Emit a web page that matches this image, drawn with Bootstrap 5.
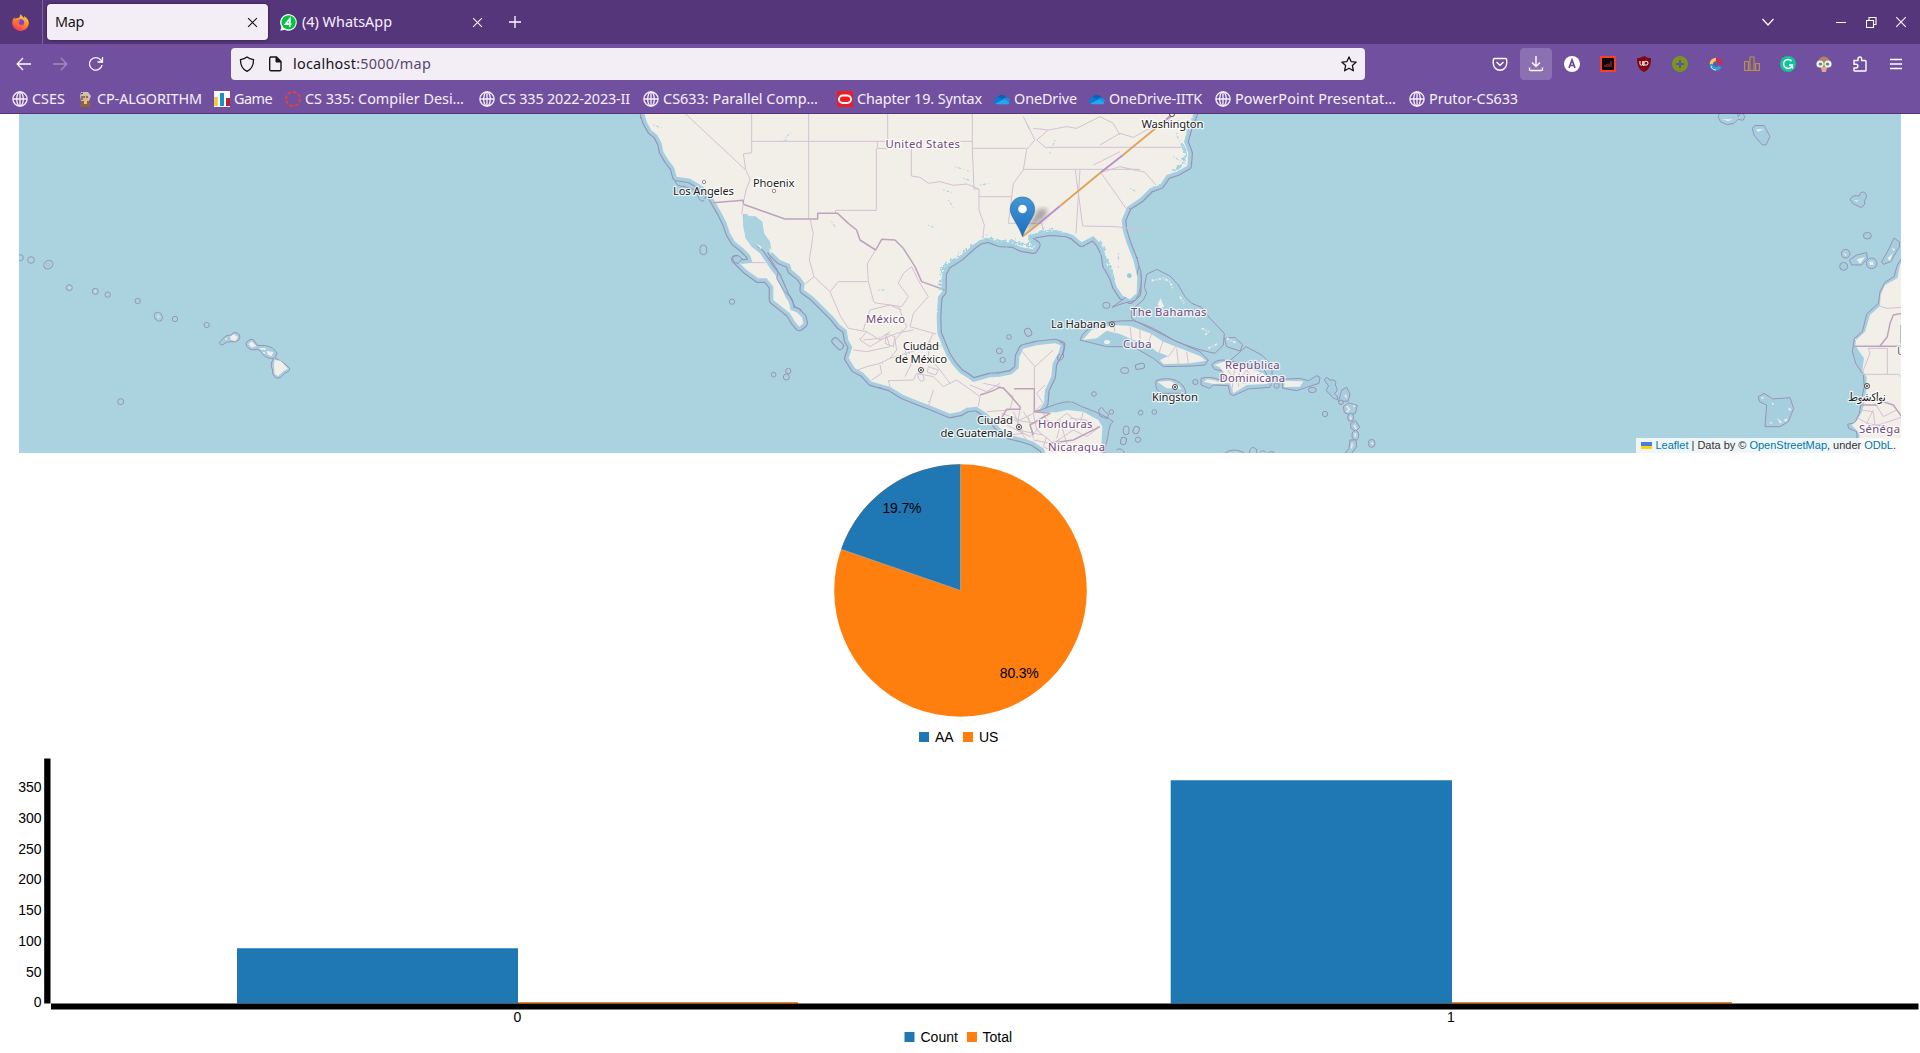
<!DOCTYPE html>
<html lang="en">
<head>
<meta charset="utf-8">
<title>Map</title>
<link href="https://cdn.jsdelivr.net/npm/bootstrap@5.3.0/dist/css/bootstrap.min.css" rel="stylesheet">
<style>
body{background:#fff;font-family:"Noto Sans","Open Sans",sans-serif;font-size:14.4px;width:1920px;height:1053px;overflow:hidden}
svg{display:block;flex:none}
.chrome{color:#f6f0fb}
.tabstrip{height:44px;background:#56367b}
.toolbar{height:40px;background:#7250a0}
.bookmarks{height:30px;background:#7250a0;border-bottom:1px solid #56367b;padding-left:12px}
.ff{width:43px;height:44px;padding-right:2px;border-right:1px solid #7b6198}
.tab{width:221px;height:36px;border-radius:4px;padding:0 10px 0 8px}
.tab.sel{background:#f3eef5;color:#15141a;margin-left:4px;box-shadow:0 0 3px #2c1547}
.urlbar{width:1134px;height:32px;margin-left:117px;border-radius:4px;background:#f3eef5;color:#15141a}
.urlpath{color:#574772}
.navs{padding-left:6px}
.exts{padding-right:6px}
.ico{width:36px;height:32px}
.dl{width:32px;margin:0 2px;background:#8b70b2;border-radius:4px}
.lbl{white-space:nowrap;line-height:18px;margin-left:5px}
.bm{height:24px;margin-top:3px}
.bm .lbl{margin-left:4px}
.bar-end{width:30px}
.mapbox{width:1882px;height:339px;margin-left:19px;background:#aad3df;overflow:hidden}
.attrib{right:0;bottom:0;height:15px;padding:0 5px;background:rgba(255,255,255,.8);font:11px/15px "Liberation Sans",Arial,sans-serif;color:#333}
.attrib a{color:#0078a8;text-decoration:none}
.charts text{font-family:"Liberation Sans",Arial,sans-serif;font-size:14px;fill:#000}
.city,.country{font-family:"Noto Sans",sans-serif;paint-order:stroke;stroke:#fff;stroke-opacity:.75;stroke-width:2.5px;stroke-linejoin:round;font-size:11.3px}
.city{fill:#222}
.country{fill:#734a7c}
.arabic{font-family:"DejaVu Sans",sans-serif}
.edge{fill:#a5cfdf;stroke:#9a92b6;stroke-width:3;stroke-linejoin:round}
.land{fill:#f2efe9}
.state{fill:none;stroke:#d3c1d2;stroke-width:3;stroke-linejoin:round}
.nation{fill:none;stroke:#bda3bd;stroke-width:4.500;stroke-linejoin:round}
.pool{fill:none;stroke:#9ccfe0;stroke-width:3;stroke-dasharray:4 5 9 7 2 12}
.ring{fill:none;stroke:#9a92b6;stroke-width:3}
</style>
<script src="https://cdn.jsdelivr.net/npm/bootstrap@5.3.0/dist/js/bootstrap.bundle.min.js"></script>
</head>
<body>
<svg width="0" height="0" class="position-absolute">
  <defs>
    <symbol id="globe" viewBox="0 0 16 16"><g fill="none" stroke="#f6f0fb" stroke-width="1.300"><circle cx="8" cy="8" r="7.100"/><ellipse cx="8" cy="8" rx="3.300" ry="7.100"/><path d="M8 1v14M1 8h14"/></g></symbol>
    <symbol id="cloud" viewBox="0 0 16 16"><path d="M3 8a5 5 0 0 1 9-2l1.500 2-5 4z" fill="#0364b8"/><path d="M0 10a3.700 3.700 0 0 1 5.500-3.300L10 9l-7 4.200A3.300 3.300 0 0 1 0 10z" fill="#0f78d4"/><path d="M9 7.500a4.500 4.500 0 0 1 4-.4A3.200 3.200 0 0 1 16 10l-3 2z" fill="#1490df"/><path d="M1.500 12.500 10 8.200l5.500 3.500a2.500 2.500 0 0 1-2.200 1.600H3.500a3 3 0 0 1-2-.8z" fill="#28a8ea"/></symbol>
    <symbol id="cross" viewBox="0 0 10 10"><path d="m1 1 8 8M9 1 1 9" fill="none" stroke="currentColor" stroke-width="1"/></symbol>
  </defs>
</svg>

<header class="chrome">
  <div class="tabstrip d-flex align-items-center">
    <div class="ff d-flex align-items-center justify-content-center">
      <svg width="17" height="17" viewBox="0 0 16 16"><defs><linearGradient id="fx" x1=".8" y1="0" x2=".3" y2="1"><stop offset="0" stop-color="#ffe13f"/><stop offset=".5" stop-color="#ff8a24"/><stop offset="1" stop-color="#f0316b"/></linearGradient></defs><path d="M8.500 0c.2 2 2 2.500 3 4 .1-1 0-1.500-.2-2.200C14 3.300 16 6 15.800 8.800 15.500 13 12 16 8 16S.3 12.800.2 8.800C.1 6.300 1 4.500 2.300 3c0 .8.300 1.200.5 1.500C4 3.300 7 4 7.300 2.500 7.400 1.500 8 .5 8.500 0z" fill="url(#fx)"/><circle cx="8.200" cy="8.300" r="3.300" fill="#7542e5"/><path d="M3.500 6.500C5.500 5 7 6 8.300 6.600 7 7 6.500 7.600 6.500 8.500c0 2 3 2.500 4.500.5.3 2-1.500 3.500-3.500 3.300-2.500-.2-4-2.500-4-5.800z" fill="#ff6a2a"/></svg>
    </div>
    <div class="tab sel d-flex align-items-center justify-content-between"><span data-w="29">Map</span><svg width="11" height="11"><use href="#cross"/></svg></div>
    <div class="tab d-flex align-items-center ms-1">
      <svg width="17" height="17" viewBox="0 0 16 16"><path d="M.3 15.700 1.300 12A7.800 7.800 0 1 1 4.300 14.800z" fill="#fff"/><circle cx="8.100" cy="7.900" r="6.700" fill="#08c143"/><path d="M9.200 12V4.500L5.300 9.500h5.400" fill="none" stroke="#fff" stroke-width="1.600"/></svg>
      <span class="lbl me-auto" data-w="90">(4) WhatsApp</span><svg width="11" height="11"><use href="#cross"/></svg>
    </div>
    <svg class="ms-3" width="12" height="12" viewBox="0 0 12 12"><path d="M6 0v12M0 6h12" stroke="#fff" stroke-width="1.300"/></svg>
    <div class="ms-auto d-flex align-items-center pe-1">
      <svg width="12" height="8" viewBox="0 0 12 8" class="me-5"><path d="m.5 1 5.500 6 5.500-6" fill="none" stroke="#fff" stroke-width="1.200"/></svg>
      <div class="bar-end d-flex justify-content-center ms-1"><svg width="10" height="10"><path d="M0 5.500h10" stroke="#fff"/></svg></div>
      <div class="bar-end d-flex justify-content-center"><svg width="11" height="11"><path d="M.5 3.500h7v7h-7zM3 3.500v-3h7v7H7.500" fill="none" stroke="#fff" stroke-width="1.100"/></svg></div>
      <div class="bar-end d-flex justify-content-center"><svg width="12" height="12"><use href="#cross"/></svg></div>
    </div>
  </div>

  <div class="toolbar d-flex align-items-center">
    <div class="navs d-flex">
      <div class="ico d-flex align-items-center justify-content-center"><svg width="16" height="16" viewBox="0 0 16 16"><path d="M15 8H1.500M7 2 1.200 8 7 14" fill="none" stroke="#fff" stroke-width="1.300"/></svg></div>
      <div class="ico d-flex align-items-center justify-content-center"><svg width="16" height="16" viewBox="0 0 16 16"><path d="M1 8h13.500M9 2l5.800 6L9 14" fill="none" stroke="#a28abf" stroke-width="1.300"/></svg></div>
      <div class="ico d-flex align-items-center justify-content-center"><svg width="16" height="16" viewBox="0 0 16 16"><path d="M14 9A6.300 6.300 0 1 1 12.800 4L14.500 6M14.500 1v5H9.500" fill="none" stroke="#fff" stroke-width="1.300"/></svg></div>
    </div>
    <div class="urlbar d-flex align-items-center">
      <svg class="ms-2" width="16" height="16" viewBox="0 0 16 16"><path d="M8 1c2 1.600 4 2.200 6.500 2.600C14.600 9 13 13 8 15.400 3 13 1.400 9 1.500 3.600 4 3.200 6 2.600 8 1z" fill="none" stroke="#15141a" stroke-width="1.300"/></svg>
      <svg class="ms-2 me-1" width="26" height="16" viewBox="-4 0 26 16"><path d="M3 1h6.500L14 5.500V13.500a1.300 1.300 0 0 1-1.300 1.300H4a1.300 1.300 0 0 1-1.300-1.300V2.300A1.300 1.300 0 0 1 4 1" fill="none" stroke="#15141a" stroke-width="1.400"/><path d="M9 1v5h5z" fill="#15141a" stroke="#15141a"/></svg>
      <span data-w="138">localhost<span class="urlpath">:5000/map</span></span>
      <svg class="ms-auto me-2" width="16" height="16" viewBox="0 0 16 16"><path d="m8 .9 2.100 4.700 5.100.5-3.800 3.500 1 5.200L8 12.200l-4.400 2.600 1-5.200L.8 6.100l5.100-.5z" fill="none" stroke="#15141a" stroke-width="1.300" stroke-linejoin="round"/></svg>
    </div>
    <div class="exts ms-auto d-flex">
      <div class="ico d-flex align-items-center justify-content-center"><svg width="16" height="16" viewBox="0 0 16 16"><path d="M2.500 2.500h11q1.200 0 1.200 1.200v3.800a6.700 6.700 0 0 1-13.400 0V3.700q0-1.200 1.200-1.200zM4.500 6 8 9.300 11.500 6" fill="none" stroke="#fff" stroke-width="1.400"/></svg></div>
      <div class="ico dl d-flex align-items-center justify-content-center"><svg width="16" height="16" viewBox="0 0 16 16"><path d="M8 0v10M4 6.500l4 4 4-4M1.500 11.500v1.700q0 1.300 1.300 1.300h10.400q1.300 0 1.300-1.300v-1.700" fill="none" stroke="#fff" stroke-width="1.400"/></svg></div>
      <div class="ico d-flex align-items-center justify-content-center"><svg width="16" height="16" viewBox="0 0 16 16"><circle cx="8" cy="8" r="8" fill="#fff"/><path d="m5 12 3-8 3 8M6 9.500h4" fill="none" stroke="#69489a" stroke-width="1.700"/></svg></div>
      <div class="ico d-flex align-items-center justify-content-center"><svg width="16" height="16" viewBox="0 0 16 16"><path d="M0 0h16v16H0z" fill="#f3402f"/><rect x="2" y="2" width="12" height="12" rx="1" fill="#080808"/><path d="M5 11V9m2 2V8m2 3V7.500m2 3.500V5" stroke="#c92a25"/></svg></div>
      <div class="ico d-flex align-items-center justify-content-center"><svg width="16" height="16" viewBox="0 0 16 16"><path d="M8 0c2 1.300 4 2 7 2.200C15 9 13.500 13.500 8 16 2.500 13.500 1 9 1 2.200 4 2 6 1.300 8 0z" fill="#800610"/><path d="M4 5v3q0 1.200 1.500 1.200T7 8V5v4.300h1.500M12 7.200a2 2 0 1 1-4 0 2 2 0 0 1 4 0z" fill="none" stroke="#fff" stroke-width="1"/></svg></div>
      <div class="ico d-flex align-items-center justify-content-center"><svg width="16" height="16" viewBox="0 0 16 16"><circle cx="8" cy="8" r="8" fill="#77961f"/><path d="M8 4v8M4 8h8" stroke="#6c4a99" stroke-width="1.800"/></svg></div>
      <div class="ico d-flex align-items-center justify-content-center"><svg width="16" height="16" viewBox="0 0 16 16"><g fill="none" stroke-width="3.400"><path d="M8 3.500A4.700 4.700 0 0 0 3.300 8" stroke="#f5c95c"/><path d="M3.300 8A4.700 4.700 0 0 0 12 10.500" stroke="#25a3dc"/><path d="M12.500 9A4.700 4.700 0 0 0 8 3.300" stroke="#d4284e"/></g><path d="M3 10a5 5 0 0 0 5 4" fill="none" stroke="#d7ecf7" stroke-width="1"/></svg></div>
      <div class="ico d-flex align-items-center justify-content-center"><svg width="16" height="16" viewBox="0 0 16 16"><path d="M.6 14.500v-9h3.800v9zM6 14.500V1h4v13.500zM11.600 14.500v-7h3.800v7zM0 14.500h16" fill="none" stroke="#b5914b" stroke-width="1.200"/></svg></div>
      <div class="ico d-flex align-items-center justify-content-center"><svg width="16" height="16" viewBox="0 0 16 16"><circle cx="8" cy="8" r="8" fill="#15c39a"/><path d="M11.500 5A4.500 4.500 0 1 0 12.400 9H9M12.400 8.500v4" fill="none" stroke="#fff" stroke-width="1.500"/></svg></div>
      <div class="ico d-flex align-items-center justify-content-center"><svg width="16" height="16" viewBox="0 0 16 16"><ellipse cx="8" cy="7" rx="6" ry="6.500" fill="#b18263"/><path d="M5 11h6l-1 5H6z" fill="#dfa78e"/><circle cx="4" cy="8" r="3.600" fill="#e9f3f4"/><circle cx="12" cy="8" r="3.600" fill="#e9f3f4"/><circle cx="4.500" cy="8" r="1.600" fill="#587d8c"/><circle cx="11.500" cy="8" r="1.600" fill="#587d8c"/></svg></div>
      <div class="ico d-flex align-items-center justify-content-center"><svg width="16" height="16" viewBox="0 0 16 16"><path d="M2 4.500h4V2.800a1.800 1.800 0 0 1 3.600 0v1.700h3.600q.8 0 .8.800v8.900q0 .8-.8.800H2.800q-.8 0-.8-.8V12h2a1.900 1.900 0 0 0 0-3.800H2z" fill="none" stroke="#fff" stroke-width="1.400"/></svg></div>
      <div class="ico d-flex align-items-center justify-content-center"><svg width="14" height="14" viewBox="0 0 14 14"><path d="M1 2.500h12M1 7h12M1 11.500h12" stroke="#fff" stroke-width="1.300"/></svg></div>
    </div>
  </div>

  <nav class="bookmarks d-flex" id="bookmarks"></nav>
</header>

<main>
<div class="mapbox position-relative">
<svg width="1882" height="339" viewBox="19 114 1882 339">
  <defs>
    <filter id="rough" x="-5%" y="-5%" width="110%" height="110%"><feTurbulence type="fractalNoise" baseFrequency=".11" numOctaves="2" seed="4" result="n"/><feDisplacementMap in="SourceGraphic" in2="n" scale="5"/></filter>
    <filter id="jag" x="-5%" y="-5%" width="110%" height="110%"><feTurbulence type="fractalNoise" baseFrequency=".1" numOctaves="3" seed="9" result="n"/><feDisplacementMap in="SourceGraphic" in2="n" xChannelSelector="R" yChannelSelector="G" scale="26"/></filter>
    <linearGradient id="pin" x1="0" y1="0" x2="0" y2="1"><stop offset="0" stop-color="#4696d2"/><stop offset="1" stop-color="#1a6fc0"/></linearGradient>
    <filter id="soft"><feGaussianBlur stdDeviation="2.500"/></filter>
    <path id="main" d="M125-20 130 0 140 35 155 62 172 75 185 100 190 125 205 150 222 172 230 200 270 206 290 218 310 230 335 258 345 275 365 310 380 340 390 370 405 395 430 415 450 435 458 458 425 462 408 448 440 480 475 505 500 505 520 530 520 570 545 590 570 610 585 635 598 650 610 640 606 622 590 607 572 600 566 575 556 560 545 535 530 500 512 478 497 455 480 430 455 410 437 385 430 350 428 312 440 312 448 320 465 318 487 335 492 370 510 395 515 425 540 450 570 463 575 480 600 500 614 520 612 540 640 560 670 590 700 620 720 645 740 660 745 690 757 712 746 745 765 775 790 788 815 815 870 830 910 855 960 875 1000 890 1050 911 1080 905 1100 893 1130 890 1160 910 1180 930 1200 955 1230 975 1270 985 1300 995 1330 1015 1350 1060 1500 1060 1505 990 1507 950 1495 930 1450 905 1400 900 1370 907 1312 907 1332 880 1335 840 1354 800 1358 760 1375 730 1382 706 1365 700 1310 706 1270 716 1258 740 1256 775 1235 793 1200 800 1170 802 1120 816 1100 802 1080 790 1058 765 1040 738 1028 710 1012 670 1010 620 1014 560 1026 545 1027 490 1040 465 1080 440 1115 408 1140 390 1165 385 1200 398 1240 400 1265 412 1300 418 1308 405 1285 390 1285 375 1350 364 1400 368 1420 376 1445 397 1480 378 1500 400 1515 430 1520 465 1540 500 1550 530 1568 557 1590 568 1610 550 1612 500 1600 450 1580 400 1568 360 1565 330 1582 290 1620 265 1650 235 1680 224 1700 195 1730 185 1762 167 1765 130 1752 95 1765 50 1780 12 1780-20z"/>
  </defs>

  <!-- North and Central America -->
  <g transform="translate(600 110) scale(.33333)">
    <g filter="url(#rough)">
    <path d="M225 205q-3 25 30 25l35 12q5 30 17 32 12-4 8-22" class="edge"/>
    <use href="#main" fill="none" stroke="#9a92b6" stroke-width="28" stroke-linejoin="round"/>
    <use href="#main" fill="none" stroke="#a3cfe0" stroke-width="21" stroke-linejoin="round"/>
    </g>
    <g transform="translate(900 0)" filter="url(#rough)">
      <path class="edge" d="M410 905C450 890 490 870 520 877 560 900 600 905 640 935 620 945 630 1000 600 1050H500V960z"/>
      <path class="edge" d="M636 592Q680 575 705 572Q730 540 722 480L716 470 700 545 680 560z" stroke-width="2"/>
    </g>
    <use href="#main" class="land" filter="url(#rough)"/>
    <path d="M430 315 448 318 465 322 485 337 490 370 505 392 512 425 500 428 480 412 455 405 437 383z" fill="#aad3df"/>
    <path d="M470 400l15 12-3 6zM508 412l9 12-7 8z" fill="#f2efe9"/>
    <path d="M398 440q22-8 27 8l-10 12q-18 0-17-20z" class="edge"/>

    <g class="state">
      <path d="M255 10 435 178M455 10V128L430 132 437 178 450 208 438 240 432 270M455 94H863V0M626 10V326M832 94V115L860 116M829 115V301H707L706 310M934 115V198L960 202 985 220 1020 215 1060 226 1100 222 1137 237"/>
      <path d="M1117 0V115H1280M1117 94H1060M1117 115 1122 237H1137V300L1153 345 1148 385M1137 260H1235M1270 178H1620M1340 112H1750M1440 180 1428 370M1426 180 1448 348 1548 350 1640 362M1225 340H1326L1330 370"/>
      <path filter="url(#rough)" d="M1280 118 1270 180 1240 220 1233 280 1225 340M1280 118 1305 90 1270 20M1340 115 1310 90 1345 60 1300 55M1500 185 1550 255 1580 298M1500 188 1560 170 1635 187 1668 225M1480 165 1560 125M1500 105 1560 70 1600 82 1640 60 1700 40 1720 10M1345 60 1400 50 1430 55 1500 20 1540 40 1560 75"/>
    </g>
    <path d="M340 278 430 271 430 283 555 327H653V310H713L745 340 770 360 780 390 827 420 845 388 885 390 910 415 945 470 965 515 1035 540" class="nation"/>
    <g class="state" filter="url(#rough)">
      <path d="M430 280 425 312M452 458H495M630 328 640 370 628 450 642 500 615 522M642 500 690 545 715 515 802 515M827 420 802 460 805 515 822 578 905 590 925 560 895 520 910 490 935 470 960 520 985 560 940 610 930 650 1008 672M690 545 722 620 745 655 800 665 840 690 890 670 940 660M800 665 780 690 810 710 860 680 870 710 800 725 760 720M895 590 920 650 885 690 890 720 870 745M760 785 800 770 840 760 870 745 950 720 985 700 1000 670M840 765 845 790 815 810M870 830 865 812 940 810 950 790 1000 800 1030 830 1070 810 1140 860M940 750 915 800M990 690 985 740 1020 780 1050 820M1000 840 985 890M860 672l25 8-5 30-25-10zM985 770l30 10-8 15-25-8zM953 795q15-15 20 15-15 12-20-15z"/>
      <path d="M905 600 870 585 810 600 790 660M790 690 840 685 870 665M910 700 920 740M960 700 1000 720 1025 705"/>
      <path d="M1150 820 1200 830 1240 860 1230 900 1160 905M1110 825 1160 845 1200 820M1262 720 1305 770 1360 720M1303 770V835M1335 825 1310 850 1330 880 1303 905M1140 860 1135 890"/>
      <path d="M1205 910 1260 930 1300 910 1310 960M1240 905 1270 970 1230 975M1330 910 1350 950 1400 910 1440 940 1450 905M1310 960 1360 1000 1420 960 1460 980 1500 950M1220 945 1290 980 1320 950M1380 930 1400 1000 1430 1030M1260 900 1250 950 1280 990M1340 980 1330 1010 1360 1025M1240 930 1310 940M1250 960 1330 975M1285 920 1300 985M1270 905 1290 935M1340 930 1380 950 1370 985M1300 990 1350 1000 1380 990M1410 925 1460 930 1480 960"/>
    </g>
    <path d="M1140 855Q1190 840 1195 833H1210L1260 890V898H1220L1195 940M1242 836H1303V905L1320 900M1300 905 1350 910 1290 945 1300 975M1350 1000 1420 990 1500 950" class="nation"/>
    <path filter="url(#rough)" d="M160 45 190 55M160 65 175 95M555 85 575 65M545 95 560 90M1030 240 1065 250M1045 270 1065 300M1140 225 1170 220M1065 170 1110 185M1090 205 1120 215M985 345 1000 352M835 540 860 540M695 335 705 350M1365 90 1350 130M1280 40 1290 60M1590 235 1610 245M1735 30 1730 75 1750 120M1720 140 1770 170M1555 430V475" class="pool"/>
    <path filter="url(#jag)" d="M1150 383 1200 395 1245 395 1300 412 1290 380 1345 362 1380 366M1120 408 1070 445 1030 470 1020 540M1500 395 1515 440 1545 510M1745 100 1760 130 1745 165 1715 185" stroke="#a3d3e0" stroke-width="8" fill="none"/>
    <circle cx="1588" cy="497" r="7" fill="#93cadb"/>
    <path d="M508 440 535 485 530 505 550 540 570 560 585 590 605 600" class="ring"/>
    <g class="ring"><rect x="300" y="405" width="20" height="29" rx="10"/><circle cx="396" cy="575" r="8"/><circle cx="521" cy="794" r="7"/><circle cx="565" cy="783" r="8"/><circle cx="559" cy="801" r="9"/><rect x="693" y="691" width="40" height="20" rx="9" transform="rotate(45 713 701)"/></g>
  </g>

  <!-- Gulf, Cuba and nearby cays -->
  <g transform="translate(900 110) scale(.33333)">
    <path class="ring" d="M478 695q22 5 12 35 5 18-15 22-8-15 5-20"/>
    <g class="ring"><circle cx="327" cy="681" r="7"/><rect x="375" y="655" width="19" height="24" rx="9" transform="rotate(-25 384 667)"/><ellipse cx="298" cy="723" rx="9" ry="8"/><circle cx="308" cy="750" r="8"/><ellipse cx="619" cy="586" rx="11" ry="9"/><rect x="662" y="773" width="24" height="17" rx="8"/><rect x="706" y="761" width="28" height="16" rx="8" transform="rotate(-12 720 769)"/><circle cx="582" cy="852" r="7"/><path d="M596 900q10-15 16 2l14 12-4 12-22-8z"/><circle cx="634" cy="906" r="7"/><circle cx="722" cy="908" r="7"/><circle cx="763" cy="906" r="7"/><rect x="670" y="948" width="17" height="26" rx="8"/><rect x="700" y="949" width="17" height="22" rx="8" transform="rotate(25 708 960)"/><rect x="662" y="982" width="17" height="22" rx="8" transform="rotate(15 670 993)"/><circle cx="714" cy="989" r="8"/><path d="M650 1020q15-12 26 15"/></g>
    <path class="edge" d="M540 690Q550 660 580 652 625 630 700 632 760 650 820 690L900 725 925 750 915 765 880 768 790 770 760 745 700 710 620 710 580 700z"/>
    <path class="land" filter="url(#rough)" d="M548 690 575 660 640 645 690 648 750 670 790 695 840 715 900 738 918 752 870 760 790 762 780 750 805 738 770 725 740 700 700 690 660 672 620 662 590 685z"/>
    <ellipse cx="621" cy="696" rx="9" ry="6" class="land"/>
    <path class="state" filter="url(#rough)" d="M640 640 645 665M690 650 695 690M720 655V700M755 670 745 700M790 690 775 735M830 705 805 740M830 715 835 760M860 725 865 760"/>
    <path class="edge" d="M768 812Q800 800 830 812 855 825 858 850L790 850Q762 845 768 812z"/><path class="land" d="M772 815 810 812 835 825 845 838 800 835z"/>
  </g>

  <!-- Bahamas, Hispaniola and the Lesser Antilles -->
  <g transform="translate(1120 250) scale(.33333)">
    <path class="ring" d="M80 73 110 58 150 78 175 105 195 140 215 160 245 172 270 205 313 250 310 285 285 310Q230 300 160 270L50 215 35 205V180L70 150 80 130 73 110z"/>
    <path class="ring" d="M313 265 345 262 368 285 360 303 320 290zM330 332 378 290 425 315 455 345 458 400"/>
    <g fill="none" stroke="#f2efe9" stroke-width="5" stroke-dasharray="8 5 3 5" filter="url(#rough)"><path d="M95 92 130 85 150 95 158 115M180 140 192 160M215 185 230 205M245 235 265 245M265 295 295 280M255 255 270 240M320 265 350 280"/></g>
    <path d="M122 145l10 25-12 5-7-12z" class="land"/>
    <path class="edge" d="M275 345q10-15 35-15l60 10 60 15 25 45-5 12-65 5-45 20-10-5-5-25-45-2-12 10-25-10 0-20q30-8 55 5l15-5-5-22-25-5z"/>
    <path class="land" filter="url(#rough)" d="M282 345 310 335 370 350 430 370 450 395 440 402 380 405 340 430 330 400 280 402 250 395 262 388 310 395 315 375 300 352z"/>
    <path class="state" filter="url(#rough)" d="M320 355 350 400 380 360 400 395 425 365M290 395 330 380 370 400 420 390 450 395M345 350 335 425M360 355 355 410"/>
    <path class="edge" d="M485 388 540 385 565 392 590 377 600 382 597 400 560 412 530 422 488 415z"/><path class="land" d="M495 392 550 394 540 410 492 411z"/>
    <g class="edge"><ellipse cx="226" cy="396" rx="8" ry="8"/><circle cx="470" cy="407" r="8"/><ellipse cx="577" cy="420" rx="12" ry="8"/><path d="M613 390q8-15 15 0 25-3 18 15 12 18-3 25 12 8 10 18-15 0-22-15-20-10-5-25z"/><path d="M655 455 665 420 680 412 690 432 685 453z"/><circle cx="663" cy="457" r="7"/><path d="M670 470 685 458 712 466 706 490 690 495 673 488z"/><ellipse cx="692" cy="502" rx="9" ry="12"/><path d="M692 520l15-8 12 20-12 12-15-10z"/><ellipse cx="706" cy="556" rx="10" ry="14"/><path d="M690 570h18l2 20-15 20H675l12-15z"/><ellipse cx="755" cy="580" rx="10" ry="12"/></g>
    <path d="M680 468l8 10-8 8M700 465l5 5M690 500l4 8M703 525l5 12M706 550v10M755 578l5 4M675 435l5 8M697 580l-3 15" stroke="#f5e6e3" stroke-width="5" fill="none"/>
    <g class="ring"><circle cx="615" cy="492" r="8"/><path d="M315 610q20-18 55-3l2 5M388 610q3-28 22-12l0 15M420 608q8-12 18 0M445 608q10-8 18 0"/></g>
  </g>

  <!-- Hawaiian chain -->
  <g transform="translate(0 230) scale(.33333)">
    <g class="ring"><circle cx="61" cy="83" r="9"/><circle cx="93" cy="90" r="10"/><ellipse cx="145" cy="104" rx="14" ry="12" transform="rotate(-35 145 104)"/><circle cx="144" cy="104" r="5" stroke-width="1"/><circle cx="208" cy="173" r="9"/><circle cx="286" cy="184" r="9"/><circle cx="323" cy="194" r="8"/><circle cx="413" cy="213" r="8"/><ellipse cx="475" cy="260" rx="11" ry="14" transform="rotate(-35 475 260)"/><circle cx="525" cy="267" r="8"/><circle cx="620" cy="285" r="8"/><circle cx="362" cy="515" r="9"/></g>
    <g fill="#cfe3e8"><circle cx="208" cy="173" r="3"/><circle cx="286" cy="184" r="3"/><circle cx="475" cy="260" r="4"/></g>
    <path class="edge" d="M658 338q12-14 20-20 8-5 14-1 6-12 20-8 12 8 5 20-10 10-24 6l-15 2q-15 15-20 1zM738 340q8-15 22-11l12 17 25 1q25 5 34 22-2 10-7 14 28 12 46 33-2 10-17 15-10 15-22 14-16-8-13-25-10-15 3-35-22 2-32-12-10-15-17-15-15 5-25-2-10-8-9-16z"/>
    <path class="land" d="M690 320l12-8 12 10-8 12-13-5zM745 342l10-8 14 14-15 5zM778 354l18 0 2 5-15 0zM800 362l20 5-5 12-12-5zM824 390l18 2 22 24-14 8-16 15-10-7-2-27z"/>
    <path class="land" d="M787 365l8 2 2 5-8-3zM674 326l7-2 0 7z"/>
  </g>

  <!-- Atlantic islands and West Africa -->
  <g transform="translate(1620 110) scale(.33333)">
    <g class="edge" stroke-width="2.600"><path d="M294 20 300 5H350l5 15 10-15 10 15-6 11-15-3-12 12-20 4-20-8z"/><path d="M397 55 405 46 433 47 450 80 438 105 426 104 402 75z"/><path d="M690 268q8-15 28-10 0-12 14-12 14 10 2 25l0 12-10 10-25-12z"/><ellipse cx="742" cy="377" rx="12" ry="10"/><circle cx="677" cy="431" r="13"/><circle cx="671" cy="469" r="12"/><path d="M688 450 710 435 740 428 742 445 725 465 695 465z"/><circle cx="755" cy="460" r="16"/><path d="M822 384 838 395 838 410 812 455 790 463 785 455 805 420z"/><path d="M415 860 432 850 458 867 510 863 521 895 505 935 480 950 435 950 440 885 418 875z"/></g>
    <g class="land"><path d="M305 28h35l-15 5zM408 58l24 0-18 7zM700 269l18 3-8 3zM672 427l8 8-5 3zM710 448l25-7-15 20zM748 455l12 0 0 10-10 0zM815 415l10 2-5 6zM803 445l15-16-8 25zM422 862l12 0-8 5zM505 893l10 5-8 5zM455 877l8 5-6 3zM472 923l15 15-8 2zM450 935l8 3-6 5zM490 930l12-5-3 10z"/></g>
    <path d="M855 430 832 465 822 500 795 517 780 545 775 580 740 612 727 665 703 685 697 725 707 760 730 795 733 830 726 860 718 910 705 938 683 943 686 955 710 965 715 1050H860z" fill="#a3cfe0" stroke="#9a92b6" stroke-width="3"/>
    <path class="land" filter="url(#rough)" d="M860 430 840 465 832 505 795 525 782 555 780 588 750 615 735 665 708 690 706 705 715 720 732 745 727 780 740 800 738 860 726 905 708 935 695 945 718 970 720 1050H860z"/>
    <path class="state" d="M778 588 800 595 850 592M745 715H802V793H725L750 730zM802 793H835L850 805M720 900 760 905 765 945M765 880 790 920 830 900M715 925 760 950 850 920M720 1000 800 990M760 900 740 940 800 950"/>
    <path class="nation" d="M845 610 820 615 810 640 802 680 780 708M698 709H850M722 885 770 885 790 875 820 885 845 920M843 645V700"/>
  </g>

  <!-- Route -->
  <path d="M1024 233 1038 210q14-5 6 8z" fill="#333" opacity=".4" filter="url(#soft)"/>
  <g stroke-width="1.900" fill="none" opacity=".9"><path d="M1022.500 236.500 1038.300 224M1060 206 1101 172.300M1122.700 155.300 1161.700 123.300" stroke="#de9c4b"/><path d="M1038.300 224 1060 206M1101 172.300 1122.700 155.300M1161.700 123.300 1173 114" stroke="#b585cb"/></g>
  <path d="M1022.500 197C1015.500 197 1010.300 202.500 1010.300 209.400 1010.300 216.500 1018 223.500 1022.500 236.500 1027 223.500 1034.700 216.500 1034.700 209.400 1034.700 202.500 1029.500 197 1022.500 197z" fill="url(#pin)" stroke="#2e6fa8" stroke-width=".7"/>
  <circle cx="1022.500" cy="209" r="4.300" fill="#fff"/>

  <g fill="#fff" stroke="#666" stroke-width=".7"><circle cx="704" cy="182" r="1.700"/><circle cx="774" cy="191" r="1.700"/></g>
  <g fill="#fff" stroke="#333" stroke-width=".9"><circle cx="921" cy="370" r="2.500"/><circle cx="1112" cy="324.300" r="2.500"/><circle cx="1175" cy="387" r="2.500"/><circle cx="1019" cy="427" r="2.500"/><circle cx="1867" cy="386" r="2.500"/><circle cx="1172" cy="114" r="2.500"/></g>
  <g fill="#333"><circle cx="921" cy="370" r="1"/><circle cx="1112" cy="324.300" r="1"/><circle cx="1175" cy="387" r="1"/><circle cx="1019" cy="427" r="1"/><circle cx="1867" cy="386" r="1"/></g>

  <g class="city">
    <text x="673" y="195" textLength="61">Los Angeles</text><text x="753" y="187" textLength="41.500">Phoenix</text>
    <text x="903" y="350" textLength="36">Ciudad</text><text x="895" y="363.300" textLength="52">de México</text>
    <text x="1141.500" y="128.200" textLength="62">Washington</text><text x="1051" y="328.200" textLength="55">La Habana</text>
    <text x="1152" y="401" textLength="46">Kingston</text><text x="977" y="424.200" textLength="36">Ciudad</text><text x="940.500" y="437.300" textLength="72">de Guatemala</text>
    <text x="1867" y="400.500" text-anchor="middle" class="arabic" textLength="38">نواكشوط</text>
  </g>
  <g class="country">
    <text x="885.500" y="148" textLength="74.500">United States</text><text x="866" y="323" textLength="39">México</text>
    <text x="1131" y="316" textLength="75.500">The Bahamas</text><text x="1123" y="347.700" textLength="28.500">Cuba</text>
    <text x="1225" y="368.700" textLength="54.500">República</text><text x="1219.500" y="382" textLength="65.500">Dominicana</text>
    <text x="1038" y="428" textLength="54.500">Honduras</text><text x="1048" y="451" textLength="57">Nicaragua</text>
    <text x="1859" y="433" textLength="41">Sénéga</text><text x="1897" y="355">U</text>
  </g>
</svg>
<div class="attrib position-absolute d-flex align-items-center"><svg class="me-1" width="11" height="8"><path fill="#4c7be1" d="M0 0h11v4H0z"/><path fill="#ffd500" d="M0 4h11v3H0z"/></svg><span data-w="240.5"><a href="#">Leaflet</a> | Data by © <a href="#">OpenStreetMap</a>, under <a href="#">ODbL</a>.</span></div>
</div>

<div class="charts">
<svg width="1920" height="300" viewBox="0 453 1920 300">
  <circle cx="960.500" cy="590.500" r="126.300" fill="#ff7f0e"/>
  <path d="M960.500 590.500V464.200A126.300 126.300 0 0 0 841.100 549.300z" fill="#1f77b4"/>
  <path d="M960.500 464.200V590.500L841.100 549.300" fill="none" stroke="#b9a896" stroke-width=".7"/>
  <text x="902" y="512.700" text-anchor="middle" textLength="39">19.7%</text><text x="1019.300" y="678.300" text-anchor="middle" textLength="39">80.3%</text>
  <path d="M919 732h10v10h-10z" fill="#1f77b4"/><text x="935" y="742">AA</text><path d="M963 732h10v10h-10z" fill="#ff7f0e"/><text x="979" y="742">US</text>
</svg>
<svg width="1920" height="300" viewBox="0 753 1920 300">
  <path d="M237 948.300h281v55.200H237zM1170.700 780.200H1452v223.300h-281.300z" fill="#1f77b4"/>
  <path d="M518 1002h280v1.500H518zM1452 1002h280v1.500h-280z" fill="#ff7f0e"/>
  <path d="M44.200 758.500h6.300v245h-6.300zM51 1003.500h1867.500v6H51z"/>
  <g text-anchor="end"><text x="41.500" y="792">350</text><text x="41.500" y="823">300</text><text x="41.500" y="854">250</text><text x="41.500" y="884">200</text><text x="41.500" y="915">150</text><text x="41.500" y="946">100</text><text x="41.500" y="977">50</text><text x="41.500" y="1007">0</text></g>
  <text x="517.300" y="1022" text-anchor="middle">0</text><text x="1451" y="1022" text-anchor="middle">1</text>
  <path d="M904.500 1032h10v10h-10z" fill="#1f77b4"/><text x="920.500" y="1042">Count</text><path d="M967 1032h10v10h-10z" fill="#ff7f0e"/><text x="982.500" y="1042">Total</text>
</svg>
</div>
</main>

<script>
const globe='<svg width="16" height="16"><use href="#globe"/></svg>', cloud='<svg width="16" height="16"><use href="#cloud"/></svg>';
const bach='<svg width="16" height="16" viewBox="0 0 16 16"><path d="M4 1h7l3 4-2 5H4L3 5z" fill="#c9c3b8"/><path d="M6 4h5v6H6z" fill="#e8b27d"/><path d="M6 6h2M9 6h2M4 3l2-1M5 5V9" stroke="#332a2a"/><path d="M4 10h9v6H3z" fill="#8d6436"/><path d="M7 10h3v3H7z" fill="#d4c6a5"/></svg>';
const game='<svg width="16" height="16"><path fill="#fff" d="M0 0h16v16H0z"/><path fill="#f3c94b" d="M0 6h4v9H0z"/><path fill="#1593c8" d="M6 2h4v13H6z"/><path fill="#b62328" d="M12 7h4v8h-4z"/></svg>';
const dash='<svg width="16" height="16"><circle cx="8" cy="8" r="7" fill="none" stroke="#ee3e38" stroke-width="1.800" stroke-dasharray="3.500 2"/></svg>';
const oracle='<svg width="16" height="16"><path fill="#ee1c25" d="M0 0h16v16H0z"/><rect x="2" y="4.500" width="12" height="7.500" rx="3.700" fill="none" stroke="#fff" stroke-width="1.900"/></svg>';
/* icon, label, label width, distance to the next bookmark */
const marks=[[globe,'CSES',33,65],[bach,'CP-ALGORITHM',105,137],[game,'Game',38,71],[dash,'CS 335: Compiler Desi…',159,194],[globe,'CS 335 2022-2023-II',131,164],[globe,'CS633: Parallel Comp…',155,194],[oracle,'Chapter 19. Syntax',125,157],[cloud,'OneDrive',63,95],[cloud,'OneDrive-IITK',93,126],[globe,'PowerPoint Presentat…',161,194],[globe,'Prutor-CS633',89,110]];
const bar=document.getElementById('bookmarks');
bar.innerHTML=marks.map(([i,t,w,s])=>`<div class="bm d-flex align-items-center" style="width:${s}px">${i}<span class="lbl" data-w="${w}">${t}</span></div>`).join('');
/* letter spacing brings each label to its nominal width */
document.querySelectorAll('[data-w]').forEach(e=>{const n=e.textContent.length,d=e.dataset.w-e.getBoundingClientRect().width;e.style.letterSpacing=(d/n)+'px'});
</script>
</body>
</html>
